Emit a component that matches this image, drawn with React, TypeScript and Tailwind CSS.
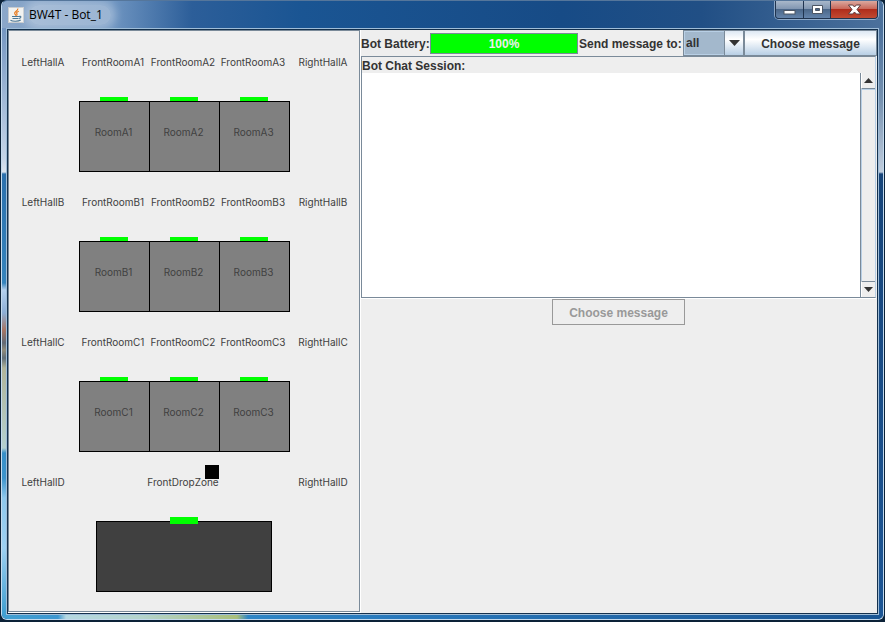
import React from "react";

const halls = ["A", "B", "C"];

function Label({ children }: { children?: React.ReactNode }) {
  return (
    <span className="flex justify-center whitespace-nowrap pr-[2px] text-[10px] leading-3 text-[#404040]">
      {children}
    </span>
  );
}

function HallSection({ id }: { id: string }) {
  return (
    <section className="h-[140px] pt-[25px]">
      <div className="grid grid-cols-5">
        <Label>LeftHall{id}</Label>
        <Label>FrontRoom{id}1</Label>
        <Label>FrontRoom{id}2</Label>
        <Label>FrontRoom{id}3</Label>
        <Label>RightHall{id}</Label>
      </div>
      <div className="mx-[70px] mt-[29px] grid grid-cols-3">
        {[1, 2, 3].map((n) => (
          <div key={n} className="flex flex-col items-center">
            <div className="h-1 w-7 bg-[#00ff00]" />
            <div className="-mr-px h-[71px] w-[71px] self-start border border-black bg-[#808080] pt-6">
              <Label>
                Room{id}
                {n}
              </Label>
            </div>
          </div>
        ))}
      </div>
    </section>
  );
}

function DropZoneSection() {
  return (
    <section className="relative pt-[25px]">
      <div className="grid grid-cols-5">
        <Label>LeftHallD</Label>
        <span />
        <Label>FrontDropZone</Label>
        <span />
        <Label>RightHallD</Label>
      </div>
      <div className="absolute left-[196px] top-[14px] h-[14px] w-[14px] bg-black" />
      <div className="mt-[29px] flex flex-col items-center">
        <div className="z-10 -mb-[3px] h-[7px] w-7 bg-[#00ff00]" />
        <div className="h-[71px] w-44 border border-black bg-[#404040]" />
      </div>
    </section>
  );
}

function JavaIcon() {
  return (
    <svg width="16" height="16" viewBox="0 0 16 16" aria-hidden="true">
      <rect x="0.5" y="0.5" width="15" height="15" fill="#f2f2f0" stroke="#c8ccd0" />
      <path d="M9.8 1.5C10.4 4 6 4.600 6.700 6.600C7 7.400 7.700 7.800 7.800 8.700M10.800 4.200C8.800 5 8.200 5.800 8.900 6.900C9.300 7.600 9 8.200 8.500 8.700" fill="none" stroke="#ea7a1c" strokeWidth="1.200" />
      <path d="M4 9.500H11M4.500 11.500H10.500M11 9.500C13.500 8.700 13.500 11 11 11.500M2.500 13.200C4.500 14.600 10.500 14.600 12.700 13" fill="none" stroke="#4d7896" strokeWidth="1.200" />
    </svg>
  );
}

function TitleBar() {
  return (
    <header className="flex h-[27px] items-start justify-between bg-[linear-gradient(90deg,#8ba7c9_0,#6f95c1_110px,#2c5e99_190px,#1a5593_300px,#174b86_560px,#214f85_700px,#4c719c_100%)] pl-[6px] pr-[5px]">
      <div className="flex items-center gap-[5px] pt-1">
        <JavaIcon />
        <h1 className="rounded-full bg-white/30 pr-2 font-['Open_Sans',sans-serif] text-[12px] font-normal leading-5 text-black shadow-[0_0_8px_5px_rgba(255,255,255,0.3)]">
          BW4T - Bot_1
        </h1>
      </div>
      <div className="flex h-[18px] overflow-hidden rounded-b-[4px] border border-t-0 border-[#20344f] shadow-[0_0_0_1px_rgba(200,218,238,0.6)]">
        <button aria-label="Minimize" className="flex w-7 items-center justify-center border-r border-[#20344f] bg-[linear-gradient(#a9b8ca_0,#8297b2_45%,#4b6789_50%,#6484ab_100%)]">
          <svg width="13" height="10" viewBox="0 0 13 10"><rect x="1" y="5.500" width="11" height="3.500" fill="#fff" stroke="#4d5664" /></svg>
        </button>
        <button aria-label="Maximize" className="flex w-[27px] items-center justify-center border-r border-[#20344f] bg-[linear-gradient(#a9b8ca_0,#8297b2_45%,#4b6789_50%,#6484ab_100%)]">
          <svg width="13" height="11" viewBox="0 0 13 11"><path fillRule="evenodd" d="M1.500 1.500H11.500V9.500H1.500ZM4.500 4.500V6.500H8.500V4.500Z" fill="#fff" stroke="#4d5664" /></svg>
        </button>
        <button aria-label="Close" className="flex w-[46px] items-center justify-center bg-[linear-gradient(#dba99f_0,#c9695b_45%,#b02d1c_50%,#c14a32_100%)]">
          <svg width="13" height="11" viewBox="0 0 13 11"><path d="M0.500 1H4.700L6.500 3L8.300 1H12.500L9 5.500L12.500 10H8.300L6.500 8L4.700 10H0.500L4 5.500Z" fill="#fff" stroke="#5b3a3c" /></svg>
        </button>
      </div>
    </header>
  );
}

function Arrow({ up = false, big = false }: { up?: boolean; big?: boolean }) {
  return (
    <svg width={big ? 11 : 9} height={big ? 6 : 5} viewBox="0 0 10 5" preserveAspectRatio="none" aria-hidden="true">
      <path d={up ? "M0 5L5 0L10 5Z" : "M0 0H10L5 5Z"} fill="#333" />
    </svg>
  );
}

function Toolbar() {
  return (
    <div className="flex h-[26px] items-center">
      <span id="battery" className="w-[69px] whitespace-nowrap pt-[2px]">Bot Battery:</span>
      <div role="progressbar" aria-labelledby="battery" aria-valuenow={100} className="mr-px mt-px flex h-[21px] flex-1 items-center justify-center border border-[#7a8a99] bg-[#00ff00] text-[#eeeeee]">
        100%
      </div>
      <label htmlFor="recipient" className="w-[104px] whitespace-nowrap pt-[2px]">Send message to:</label>
      <div className="relative flex h-[26px] w-[61px] border border-[#7a8a99]">
        <select id="recipient" className="w-full appearance-none border border-[#b8cfe5] bg-[#a3b8cc] pl-px text-[12px] font-bold text-[#333]">
          <option>all</option>
        </select>
        <span className="pointer-events-none absolute inset-y-0 right-0 flex w-[19px] items-center justify-center border-l border-[#7a8a99] bg-[linear-gradient(#dde8f3_0,#ffffff_35%,#b8cfe5_100%)]">
          <Arrow big />
        </span>
      </div>
      <button className="h-[26px] w-[133px] border border-[#7a8a99] bg-[linear-gradient(#dde8f3_0,#ffffff_35%,#b8cfe5_100%)] pt-[2px]">
        Choose message
      </button>
    </div>
  );
}

function ChatSession() {
  return (
    <div className="mr-px flex h-[242px] flex-col border border-[#7a8a99] border-r-[#b8cfe5] shadow-[0_1px_0_#fff]">
      <label htmlFor="chat" className="h-4 leading-[18px]">Bot Chat Session:</label>
      <div className="flex min-h-0 flex-1">
        <textarea id="chat" readOnly className="block min-w-0 flex-1 resize-none bg-white outline-none" />
        <div className="flex w-[15px] flex-col border-l border-[#7a8a99]">
          <button aria-label="Scroll up" className="flex h-4 items-center justify-center border-b border-l border-b-[#7a8a99] border-l-white">
            <Arrow up />
          </button>
          <div className="flex-1 border-l border-t border-[#b8cfe5]" />
          <button aria-label="Scroll down" className="flex h-4 items-center justify-center border-l border-t border-l-white border-t-[#7a8a99]">
            <Arrow />
          </button>
        </div>
      </div>
    </div>
  );
}

export default function App() {
  return (
    <div className="h-screen bg-[#0c2238] pb-[2px] pl-px pr-px font-['Liberation_Sans',Arial,sans-serif] text-[12px] font-bold text-[#333]">
      <div className="flex h-full flex-col overflow-hidden rounded-[6px] border border-[#c4daee] border-t-[#55769b] bg-[#1a5593]">
        <TitleBar />
        <div className="flex min-h-0 flex-1">
          <div className="w-1 bg-[linear-gradient(#7496c1_0,#c5d5e8_130px,#dbe4ef_144px,#2b70ad_146px,#3584bd_255px,#b4d0ee_262px,#8caed5_285px,#a87664_302px,#626a75_315px,#918c7b_322px,#626f78_330px,#b0b49a_340px,#b4d0cf_420px,#378fc8_425px,#3d94cc_450px,#8ec8ed_470px,#9dd0f2_520px,#42a0d2_584px)]" />
          <main className="flex min-w-0 flex-1 border border-[#9fbdd8] bg-[#eeeeee]">
            <div className="flex min-w-0 flex-1 border border-[#14304c]">
              <div className="w-[353px] shrink-0 border-b border-r border-white">
                <div className="h-full border border-[#7a8a99] font-['Inter',sans-serif] font-normal">
                  {halls.map((id) => (
                    <HallSection key={id} id={id} />
                  ))}
                  <DropZoneSection />
                </div>
              </div>
              <div className="flex min-w-0 flex-1 flex-col">
                <Toolbar />
                <ChatSession />
                <button disabled className="mr-px mt-px h-[26px] w-[133px] self-center border border-[#999] pt-[2px] text-[#999]">
                  Choose message
                </button>
              </div>
            </div>
          </main>
          <div className="w-1 bg-[linear-gradient(#4c719c_0,#7591b0_70px,#c0cddd_144px,#17457a_146px,#1d5695_100%)]" />
        </div>
        <div className="h-1 bg-[linear-gradient(90deg,#42a0d2_0,#3d97d0_56px,#b4d8e2_64px,#b4d4cc_140px,#a9bf7c_235px,#2f86c6_246px,#2878bb_400px,#1a5593_100%)]" />
      </div>
    </div>
  );
}
